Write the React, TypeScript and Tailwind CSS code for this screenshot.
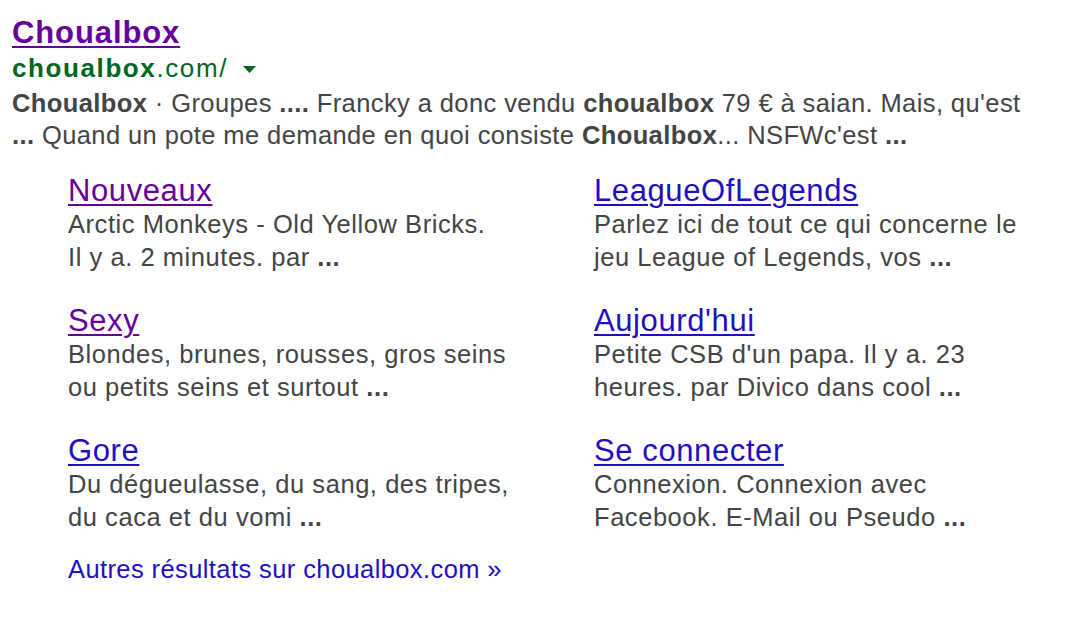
const sitelinks = [
  {
    title: "Nouveaux",
    visited: true,
    lines: ["Arctic Monkeys - Old Yellow Bricks.", "Il y a. 2 minutes. par"],
  },
  {
    title: "LeagueOfLegends",
    visited: false,
    lines: ["Parlez ici de tout ce qui concerne le", "jeu League of Legends, vos"],
  },
  {
    title: "Sexy",
    visited: true,
    lines: ["Blondes, brunes, rousses, gros seins", "ou petits seins et surtout"],
  },
  {
    title: "Aujourd'hui",
    visited: false,
    lines: ["Petite CSB d'un papa. Il y a. 23", "heures. par Divico dans cool"],
  },
  {
    title: "Gore",
    visited: false,
    lines: ["Du dégueulasse, du sang, des tripes,", "du caca et du vomi"],
  },
  {
    title: "Se connecter",
    visited: false,
    lines: ["Connexion. Connexion avec", "Facebook. E-Mail ou Pseudo"],
  },
];

export default function App() {
  return (
    <div className="min-h-screen bg-white pl-[12px] pt-[15px] font-['Liberation_Sans',Arial,sans-serif]">
      {/* main result */}
      <a
        href="#"
        className="block w-fit whitespace-nowrap text-[31px] font-bold leading-[36px] tracking-[0.9px] text-[#660099] underline decoration-[1.5px] underline-offset-[3px]"
      >
        Choualbox
      </a>
      <div className="flex items-center whitespace-nowrap text-[26px] leading-[34px] tracking-[1.6px] text-[#006621]">
        <span>
          <b>choualbox</b>.com/
        </span>
        <svg width="13" height="7" viewBox="0 0 13 7" className="ml-[15px] mt-[2px]">
          <path d="M0 0 H13 L6.5 7 Z" fill="#006621" />
        </svg>
      </div>
      <p className="mt-[2px] whitespace-nowrap text-[25.5px] leading-[32px] tracking-[0.4px] text-[#444]">
        <b>Choualbox</b> · Groupes <b>....</b> Francky a donc vendu <b>choualbox</b> 79 € à saian. Mais, qu'est
        <br />
        <b>...</b> Quand un pote me demande en quoi consiste <b>Choualbox</b>... NSFWc'est <b>...</b>
      </p>

      {/* sitelinks */}
      <div className="mt-[22px] grid w-[1052px] grid-cols-[526px_526px] gap-y-[30px] pl-[56px]">
        {sitelinks.map((s) => (
          <div key={s.title} className="whitespace-nowrap">
            <a
              href="#"
              className={`block w-fit text-[31px] leading-[35px] tracking-[0.6px] underline decoration-[1.5px] underline-offset-[3px] ${
                s.visited ? "text-[#660099]" : "text-[#1f0fc2]"
              }`}
            >
              {s.title}
            </a>
            <div className="text-[25.5px] leading-[32.5px] tracking-[0.55px] text-[#444]">
              {s.lines[0]}
              <br />
              {s.lines[1]} <b>...</b>
            </div>
          </div>
        ))}
      </div>

      <a
        href="#"
        className="mt-[20px] ml-[56px] block w-fit whitespace-nowrap text-[25.5px] leading-[32px] tracking-[0.4px] text-[#1f0fc2]"
      >
        Autres résultats sur choualbox.com »
      </a>
    </div>
  );
}
